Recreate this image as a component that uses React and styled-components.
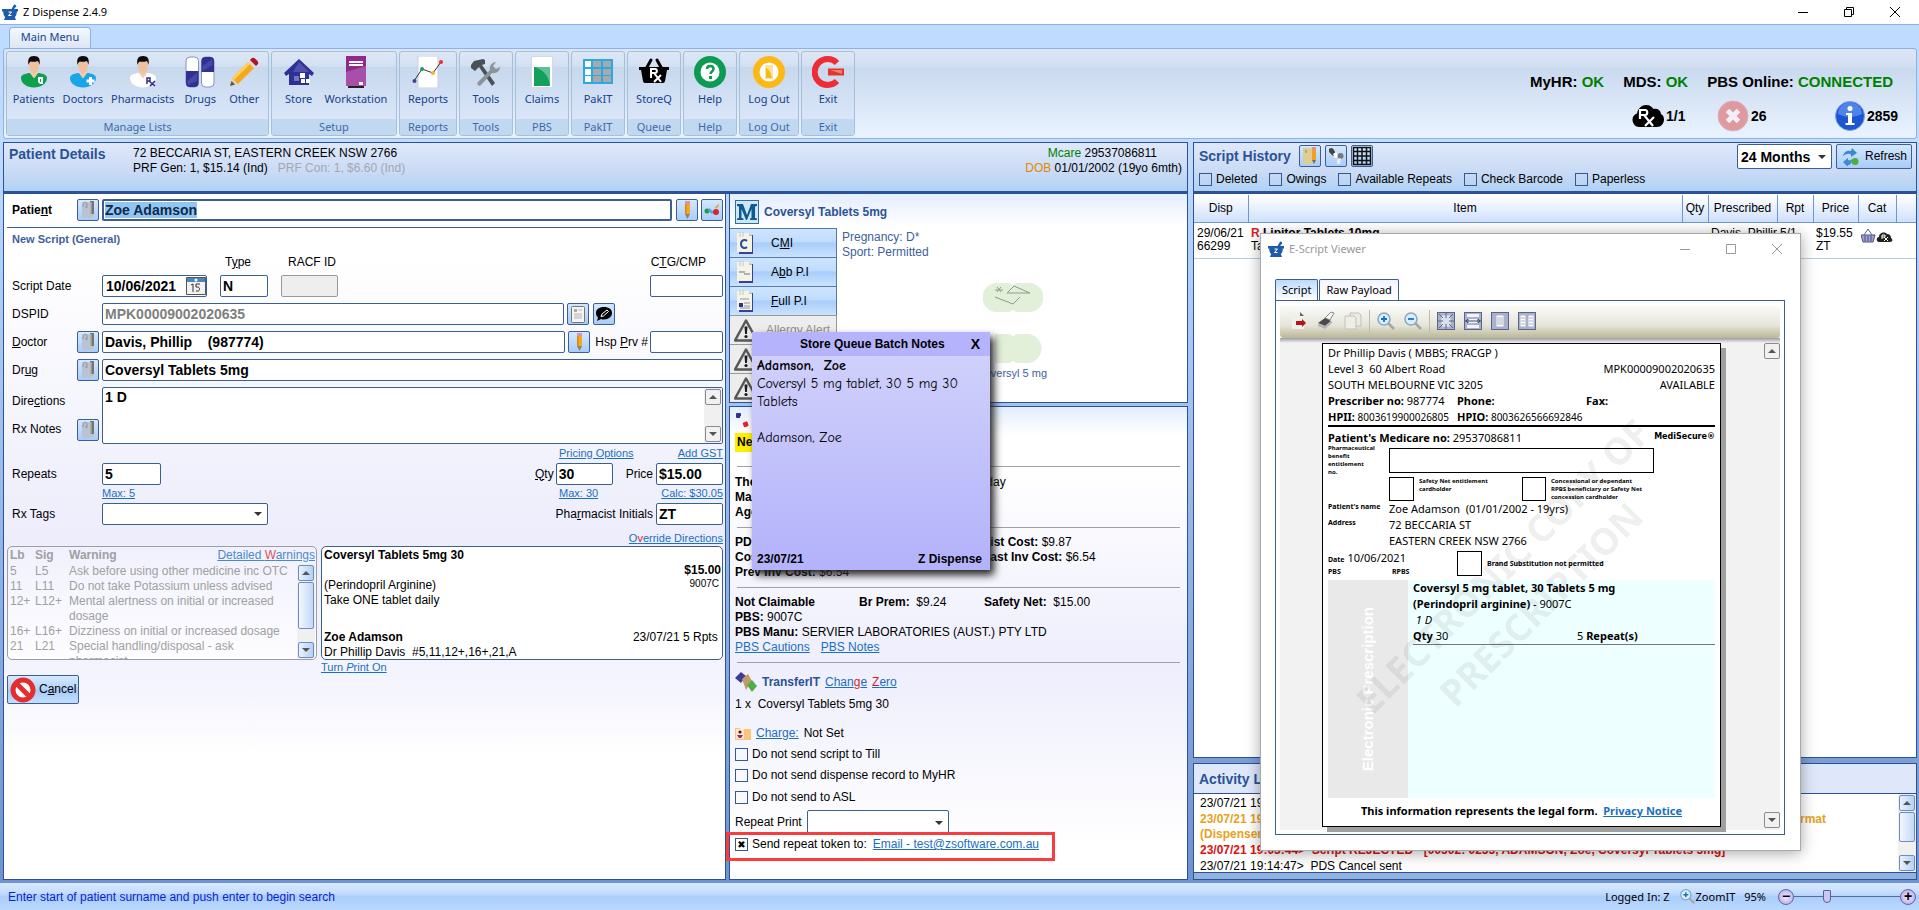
import React from 'react'
import styled, { createGlobalStyle, css } from 'styled-components'

const GlobalStyle = createGlobalStyle`
  * { box-sizing: border-box; }
  body { margin: 0; background: #bfdbff; }
  button, input, select, textarea { font: inherit; color: inherit; margin: 0; }
  svg { display: block; flex: none; }
`

const UI = '"Noto Sans", "Open Sans", sans-serif'
const ARIAL = '"Liberation Sans", Arial, sans-serif'
const LINE = '#3b5f95'
const NAVY = '#2b5296'

/* ---------- icons ---------- */

const Mortar = () => (
  <svg width="16" height="16" viewBox="0 0 16 16">
    <path d="M9.500 5 12 .800a1.500 1.500 0 0 1 2.200 1.600L12 5z" fill="#1d5cab" />
    <path d="M0 5h16v2.500h-1.200c0 3-.800 4.500-2 5.500l1.200 3H2l1.200-3C2 12 1.200 10.500 1.200 7.500H0z" fill="#1d5cab" />
    <path d="M6.500 8h3l-3 3.500h3" stroke="#fff" fill="none" />
  </svg>
)

const Person = ({ color, badge }) => (
  <svg width="28" height="32" viewBox="0 0 28 32">
    <path d="M1 22c0-3.500 4-4 8-5h10c4 1 8 1.500 8 5 0 5.500-6 9.500-13 9.500S1 27.500 1 22z" fill={color} />
    <path d="M9.500 16.500h9L14 22.500z" fill="#f4cdaa" />
    <path d="M9 7c0-3 2-5 5-5s5 2 5 5c0 4-1 8-2 9l-3 2-3-2c-1-1-2-5-2-9z" fill="#efc19c" />
    <path d="M8.500 9C7.500 3 9 0 14 0s6.500 3 5.500 9c-.500-2-1-3.500-2-4-2 1-5 1-6.500.500-1.500.500-2 1.500-2.500 3.500z" fill="#0b0b10" />
    {badge === 'tag' && <path d="M18 21h5v7h-3l-2-2z M20 23v3h1v-3z" fill="#fff" fillRule="evenodd" />}
    {badge === 'cross' && <path d="M20 21h3v2.500h2.500v3H23V29h-3v-2.500h-2.500v-3H20z" fill="#fff" />}
    {badge === 'rx' && <path d="M18 28v-6h3v3h-3m2 0 6 5m0-5-5 5" stroke="#2f2b86" strokeWidth="1.500" fill="none" />}
  </svg>
)

const Drugs = () => (
  <svg width="30" height="32" viewBox="0 0 30 32">
    <rect x="1" y="1" width="12.500" height="30" rx="4" fill="#fff" stroke="#8d90b8" />
    <path d="M1 15h12.500v12a4 4 0 0 1-4 4H5a4 4 0 0 1-4-4z" fill="#2e3192" />
    <rect x="16.500" y="1" width="12.500" height="30" rx="4" fill="#fff" stroke="#8d90b8" />
    <path d="M16.500 16h12.500V5a4 4 0 0 0-4-4h-4.500a4 4 0 0 0-4 4z" fill="#2e3192" />
    <path d="M2 25 12 17v8l-9 4zM17.500 10l10-7v6l-10 6z" fill="#5559b3" opacity=".6" />
  </svg>
)

const Pencil = () => (
  <svg width="32" height="32" viewBox="0 0 32 32">
    <path d="M2 30 4 22l6 6z" fill="#e8cfa8" />
    <path d="M2 30l1.500-5 3.500 3.500z" fill="#555" />
    <path d="M4 22 20 6l6 6-16 16z" fill="#f5a81c" />
    <path d="M4 22 20 6l2 2L6 24z" fill="#ffd25a" />
    <path d="M20 6l3-3 6 6-3 3z" fill="#d9d9e2" />
    <path d="M22 4l2-2c1-.700 2-.300 3 .500l2.500 2.500c.800 1 1 2 .500 3l-2 2z" fill="#b3141f" />
  </svg>
)

const House = () => (
  <svg width="32" height="32" viewBox="0 0 32 32">
    <path d="M16 3 31 17l-2 3-3-2v11H6V18l-3 2-2-3z" fill="#2e3192" />
    <path d="M16 6 26 16H10z" fill="#5a5fc0" opacity=".7" />
    <rect x="11" y="20" width="5" height="5" fill="#6f75c4" />
    <rect x="17" y="17" width="5" height="5" fill="#fff" />
    <rect x="18" y="23" width="4" height="4" fill="#fff" />
    <rect x="23" y="23" width="4" height="4" fill="#fff" />
  </svg>
)

const Workstation = () => (
  <svg width="22" height="32" viewBox="0 0 22 32">
    <rect x="1" width="20" height="30" fill="#92278f" />
    <path d="M1 16 21 10v20H1z" fill="#b66bbb" opacity=".6" />
    <rect x="4" y="5" width="14" height="5" fill="#fff" />
    <path d="M4 7.500h14" stroke="#92278f" />
    <rect x="14" y="26" width="4" height="3" fill="#fff" />
    <rect x="3" y="30" width="16" height="2" fill="#222" />
  </svg>
)

const Reports = () => (
  <svg width="32" height="32" viewBox="0 0 32 32">
    <path d="M6 0h20v32H6z" fill="#fff" stroke="#c8d0dc" />
    <path d="M2 25 10 13l11 4 8-11" fill="none" stroke="#333" />
    <circle cx="2.500" cy="25" r="2" fill="#4a3f8f" />
    <circle cx="10" cy="13" r="2" fill="#12a05c" />
    <circle cx="21" cy="17" r="2" fill="#f5b41c" />
    <circle cx="29" cy="6" r="2" fill="#ee2a2f" />
  </svg>
)

const Tools = () => (
  <svg width="32" height="32" viewBox="0 0 32 32">
    <path d="M1 9l3-4 9-2 2 1v4l-3 1 13 18-3 3L9 11l-4 4-4-3z" fill="#4b5257" />
    <path d="M8 26 20 14c-1-4 2-8 6-8l-3 4 3 3 4-2c0 4-4 7-8 6L11 29c-2 2-5-1-3-3z" fill="#8d9499" />
  </svg>
)

const Claims = () => (
  <svg width="22" height="32" viewBox="0 0 22 32">
    <path d="M.500.500h21v31H.500z" fill="#fff" stroke="#d3dae6" />
    <path d="M3 11h16v19H3z" fill="#12a05c" />
    <path d="M3 11h16v19C18 20 12 13 3 11z" fill="#5fc091" />
  </svg>
)

const PakIT = () => (
  <svg width="32" height="32" viewBox="0 0 32 32">
    <rect x="1" y="3" width="30" height="25" fill="#29abe2" />
    {[5, 13, 20].map(y => (
      <g key={y}>
        <rect x="3" y={y} width="6" height="6" fill="#fff" />
        <rect x="11" y={y} width="8" height="6" fill="#a7a9ac" />
        <rect x="21" y={y} width="8" height="6" fill="#a7a9ac" />
      </g>
    ))}
  </svg>
)

const Basket = () => (
  <svg width="32" height="32" viewBox="0 0 32 32">
    <path d="M8 13 13 4M24 13 19 4" stroke="#000" strokeWidth="3" strokeLinecap="round" />
    <path d="M1 11h30v3h-2l-2 11c-.300 1-1 2-2 2H7c-1 0-2-1-2-2L3 14H1z" fill="#000" />
    <path d="M13 22v-9h4c2.500 0 2.500 4 0 4h-4m3 0 7 9m0-7-7 7" stroke="#fff" strokeWidth="2" fill="none" />
  </svg>
)

const Help = () => (
  <svg width="32" height="32" viewBox="0 0 32 32">
    <circle cx="16" cy="16" r="16" fill="#0b9b54" />
    <circle cx="16" cy="16" r="9.500" fill="#fff" />
    <path d="M13 13c0-4 6.500-4 6.500 0 0 2.500-3 2.500-3 5" stroke="#0b9b54" strokeWidth="2.500" fill="none" />
    <rect x="15" y="20" width="3" height="3" fill="#0b9b54" />
  </svg>
)

const LogOut = () => (
  <svg width="32" height="32" viewBox="0 0 32 32">
    <circle cx="16" cy="16" r="16" fill="#fdb913" />
    <circle cx="16" cy="16" r="9.500" fill="#fff" />
    <path d="M12 9h8v14h-8z" fill="#fbe3a0" />
    <path d="M13 12c3 1 5 5 6 10h-6z" fill="#fdb913" />
  </svg>
)

const Exit = () => (
  <svg width="32" height="32" viewBox="0 0 32 32">
    <path d="M25 7A13 13 0 1 0 25 25" fill="none" stroke="#ed2d36" strokeWidth="6" />
    <rect x="16" y="12.500" width="16" height="7" fill="#e5342f" />
    <path d="M18 14h12v4z" fill="#f37b6c" />
  </svg>
)

const CloudRx = () => (
  <svg width="32" height="22" viewBox="0 0 32 22">
    <path d="M7 22a7 7 0 0 1-2-13.500C6 3 10 0 14 0c4 0 6 2 7.500 4 4-1 7 1 7.500 5 2 1 3 3 3 5.500 0 4-3 7.500-7 7.500z" fill="#000" />
    <path d="M8 14V5h5c3 0 3 5 0 5H8m4 0 9 11m1-9-9 9" stroke="#fff" strokeWidth="2.200" fill="none" />
  </svg>
)

const ErrorIcon = () => (
  <svg width="32" height="32" viewBox="0 0 32 32">
    <circle cx="16" cy="16" r="15" fill="#e09a9f" stroke="#d5b1bb" />
    <path d="M10.500 10.500l11 11m0-11-11 11" stroke="#f2f0f6" strokeWidth="5" />
  </svg>
)

const InfoIcon = () => (
  <svg width="30" height="30" viewBox="0 0 30 30">
    <circle cx="15" cy="15" r="14.500" fill="#1c55cf" stroke="#7aa4e0" />
    <path d="M3 13a12 12 0 0 1 24 0c-8 4-16 4-24 0z" fill="#4f83e8" />
    <circle cx="15" cy="7.500" r="2.500" fill="#fff" />
    <path d="M11 12h6v10h2.500v2h-9v-2H13v-8h-2z" fill="#fff" />
  </svg>
)

const Lookup = () => (
  <svg width="14" height="18" viewBox="0 0 14 18">
    <path d="M1 1h9v16H1z" fill="#b9c3d3" />
    <path d="M2 6c0-6 4-6 4-2s-1 4-1 1" stroke="#8a929c" fill="none" />
    <rect x="9" y="0" width="4" height="13" fill="#767676" />
    <rect x="9" y="1" width="1.500" height="12" fill="#b9b2a6" />
    <path d="M9 13h4l-2 4z" fill="#c7beb0" />
  </svg>
)

const SmallPencil = () => (
  <svg width="7" height="18" viewBox="0 0 7 18">
    <rect x="1" y="0" width="5" height="4" fill="#d890b8" />
    <rect x="1" y="3" width="5" height="10" fill="#f3a81f" />
    <rect x="1" y="3" width="1.500" height="10" fill="#d18a14" />
    <path d="M1 13h5l-2.500 5z" fill="#8a7f72" />
  </svg>
)

const Family = () => (
  <svg width="16" height="12" viewBox="0 0 16 12">
    <circle cx="3" cy="7" r="2.500" fill="#1e9a48" />
    <path d="M5 4l5 4-2 2-4-3z" fill="#4fa8e0" />
    <circle cx="12" cy="8" r="3" fill="#d8232a" />
    <path d="M11 3l4-3v2l-3 3z" fill="#e8a13c" />
  </svg>
)

const Sheet = ({ mark }) => (
  <svg width="18" height="22" viewBox="0 0 18 22">
    <path d="M3 3h14v19H3z" fill="#3b3f9a" />
    <path d="M1 1h12l3 3v16H1z" fill="#f5f3e6" />
    <path d="M13 1v3h3z" fill="#c9c6b4" />
    <path d="M4 0v5m3-5v5" stroke="#c9c7b6" />
    {mark === 'c' && <path d="M11 9c-2-2-6-1-6 3s4 5 6 3" stroke="#2c4f9e" strokeWidth="2" fill="none" />}
    {mark === 'line' && <path d="M3 11h6m-1 2h6" stroke="#9b9ca6" strokeWidth="1.500" />}
    {mark === 'full' && (
      <g>
        <path d="M4 9h9M8 13h6M8 16h6M4 18h10" stroke="#8f93a8" />
        <rect x="3" y="13" width="4" height="4" fill="#2e3192" />
      </g>
    )}
  </svg>
)

const Warn = () => (
  <svg width="24" height="23" viewBox="0 0 24 23">
    <path d="M12 1.500 23 21.500H1z" fill="#e9e9e9" stroke="#585858" strokeWidth="2.500" strokeLinejoin="round" />
    <path d="M10.500 7.500h3l-.600 7.500h-1.800z" fill="#1a1a1a" />
    <circle cx="12" cy="17.500" r="1.600" fill="#1a1a1a" />
  </svg>
)

const LogoM = () => (
  <svg width="24" height="24" viewBox="0 0 24 24">
    <rect x=".5" y=".5" width="23" height="23" fill="#cfe6f5" stroke="#2f6d9d" />
    <path d="M2 4h6l4 11 4-11h6v2l-2 .500V18l2 .500V20h-7v-1.500l1.500-.500V9l-4.500 11h-1L6.500 9v9l2 .500V20H2v-1.500L4 18V6.500L2 6z" fill="#0d5a94" />
  </svg>
)

const Pills = () => (
  <svg width="16" height="18" viewBox="0 0 16 18">
    <rect x="1" y="2" width="5" height="5" rx="1" fill="#2e3192" />
    <rect x="5" y="5" width="5" height="5" rx="1" fill="#f2f2f6" />
    <rect x="8" y="11" width="5" height="5" rx="1" fill="#e2262c" transform="rotate(-20 10 13)" />
  </svg>
)

const Transfer = () => (
  <svg width="22" height="20" viewBox="0 0 22 20">
    <path d="M0 6 6 0l5 4-5 7z" fill="#3b3c95" />
    <path d="M7 7l6-5 4 7-6 9z" fill="#c29a66" />
    <path d="M12 13l5-5 5 6-5 6z" fill="#4fae4a" />
  </svg>
)

const ChargeIcon = () => (
  <svg width="16" height="13" viewBox="0 0 16 13">
    <path d="M0 1h5l1 1h10v11H0z" fill="#fbc47c" />
    <rect x="1" y="2" width="8" height="10" fill="#fde7c8" />
    <circle cx="5" cy="5" r="1.500" fill="#222" />
    <path d="M2 8h6l-2 3H4z" fill="#a3246b" />
  </svg>
)

const Ban = () => (
  <svg width="26" height="26" viewBox="0 0 26 26">
    <circle cx="13" cy="13" r="10" fill="#fff" stroke="#e52c2f" strokeWidth="5" />
    <path d="M6 6l14 14" stroke="#e52c2f" strokeWidth="5" />
  </svg>
)

const Bubble = () => (
  <svg width="16" height="14" viewBox="0 0 16 14">
    <path d="M8 0c5 0 8 2.500 8 6s-3 6.500-8 6.500c-1 0-2 0-3-.500L1 14l1-3.500C.500 9 0 8 0 6 0 2.500 3 0 8 0z" fill="#000" />
    <path d="M5 9.500 6 7l5-4 1.500 1.500L7.500 9z" fill="none" stroke="#fff" />
  </svg>
)

const Doc = () => (
  <svg width="14" height="17" viewBox="0 0 14 17">
    <rect x=".5" y=".5" width="13" height="16" rx="1" fill="#f4f4f4" stroke="#777" />
    <path d="M3 3h3v3H3z" fill="#aaa" />
    <path d="M7 4h4M3 8h8M3 10h8M3 12h8" stroke="#b7b7b7" />
  </svg>
)

const GridIcon = () => (
  <svg width="20" height="20" viewBox="0 0 20 20">
    <path d="M1.500 1.500h17v17h-17zM5.500 1v18M10 1v18M14.500 1v18M1 5.500h18M1 10h18M1 14.500h18" fill="none" stroke="#111" strokeWidth="1.500" />
  </svg>
)

const PadPencil = () => (
  <svg width="16" height="18" viewBox="0 0 16 18">
    <path d="M1 1h9v16H1z" fill="#ddcf94" />
    <path d="M3 3h2v3H3z" fill="#b9a968" />
    <rect x="10" y="0" width="4" height="3" fill="#d890b8" />
    <rect x="10" y="2" width="4" height="11" fill="#f3a01f" />
    <path d="M10 13h4l-2 4z" fill="#7a6a52" />
  </svg>
)

const Capsules = () => (
  <svg width="16" height="18" viewBox="0 0 16 18">
    <path d="M1 2c2-2 4-1 5 1l2 4-3 2-4-4z" fill="#444" />
    <path d="M5 7l3-2 3 5-4 1z" fill="#fff" />
    <circle cx="12.500" cy="9" r="3" fill="#777" />
    <path d="M9 12l4-1-1 6h-3z" fill="#ececec" />
  </svg>
)

const RefreshIcon = () => (
  <svg width="18" height="18" viewBox="0 0 18 18">
    <path d="M1 8c1-5 5-6 8-5l1-3 5 5-6 4V6.500C7 5 4 6 1 8z" fill="#3c8ad0" />
    <path d="M1 14l5-4v2c2 1 3 0 4-1 0 4-2 6-4 6v2z" fill="#3c8ad0" />
    <circle cx="13" cy="13.500" r="3.500" fill="#4caf3a" />
  </svg>
)

const BasketCloud = () => (
  <svg width="32" height="16" viewBox="0 0 32 16">
    <path d="M3 8 7 2l4 6" fill="none" stroke="#5d628a" />
    <path d="M0 8h14l-2 7H2z" fill="#9ea3cc" stroke="#4d5187" />
    <path d="M4 9v5m3-5v5m3-5v5" stroke="#4d5187" />
    <path d="M18 15c-3 0-3-5 0-5 0-4 5-6 8-3 3 0 4 2 4 4 2 1 2 4-1 4z" fill="#222" />
    <path d="M21 12V8h3v2h-3m2 0 4 4m0-4-4 4" stroke="#fff" fill="none" />
  </svg>
)

const Magnifier = ({ sign, size = 20 }) => (
  <svg width={size} height={size} viewBox="0 0 20 20">
    <path d="M12 12l6 6" stroke="#a9a5a0" strokeWidth="2.500" />
    <circle cx="8" cy="8" r="6" fill="#d8efff" stroke="#8aa6c4" strokeWidth="1.500" />
    <path d={sign === '+' ? 'M5 8h6M8 5v6' : 'M5 8h6'} stroke="#1b72c4" strokeWidth="1.800" />
  </svg>
)

const Export = () => (
  <svg width="20" height="20" viewBox="0 0 20 20">
    <path d="M3 2h8l4 4v12H3z" fill="#efefec" />
    <path d="M11 1l4 4h-4z" fill="#666" />
    <path d="M7 10h6V8l4 4-4 4v-2H7z" fill="#b3151a" />
  </svg>
)

const Print = () => (
  <svg width="20" height="20" viewBox="0 0 20 20">
    <path d="M9 7l6-6 3 1-4 7z" fill="#f6f6f6" stroke="#8a8a8a" />
    <path d="M2 12l7-5 6 3-6 5z" fill="#4b4b4f" />
    <path d="M2 12v3l7 3 7-6v-2l-7 5z" fill="#b5b5ba" />
  </svg>
)

const Copy = () => (
  <svg width="20" height="20" viewBox="0 0 20 20">
    <path d="M7 2h9l2 2v11H7z" fill="#ecebe2" stroke="#c2c1b6" />
    <path d="M2 5h9l2 2v11H2z" fill="#efeee6" stroke="#c2c1b6" />
  </svg>
)

const ViewMode = ({ mode }) => (
  <svg width="18" height="18" viewBox="0 0 18 18">
    <rect x=".5" y=".5" width="17" height="17" fill="#a9b1cc" stroke="#5a6488" />
    {mode === 'fit' && (
      <g fill="none" stroke="#eef0f6">
        <path d="M5 4h8v10H5z" fill="#d9deec" />
        <path d="M9 1v5M9 12v5M1 9h5M12 9h5M2 2l4 4M16 2l-4 4M2 16l4-4M16 16l-4-4" stroke="#5a6488" />
      </g>
    )}
    {mode === 'width' && (
      <g>
        <path d="M3 2h12v3H3zM3 13h12v3H3zM5 7h8v4H5z" fill="#f4f5fa" />
        <path d="M1 9h16M4 7 2 9l2 2M14 7l2 2-2 2" stroke="#3f4970" fill="none" />
      </g>
    )}
    {mode === 'one' && <path d="M5 3h8v12H5zM6 6h6M6 8h6M6 10h6M6 12h6" fill="#fff" stroke="#a9b1cc" />}
    {mode === 'two' && <path d="M2 3h6v12H2zM10 3h6v12h-6zM3 6h4M3 9h4M3 12h4M11 6h4M11 9h4M11 12h4" fill="#fff" stroke="#a9b1cc" />}
  </svg>
)

const WinIcon = ({ kind, color = '#000' }) => (
  <svg width="12" height="12" viewBox="0 0 12 12" fill="none" stroke={color}>
    {kind === 'min' && <path d="M1 6.500h10" />}
    {kind === 'restore' && <path d="M1.500 3.500h7v7h-7zM3.500 3.500v-2h7v7h-2" />}
    {kind === 'max' && <path d="M1.500 1.500h9v9h-9z" />}
    {kind === 'close' && <path d="M1 1l10 10M11 1 1 11" />}
  </svg>
)

const CalendarIcon = () => (
  <svg width="20" height="18" viewBox="0 0 20 18">
    <path d="M.5.5h19v17H.5z" fill="#f2f2f2" stroke="#555" />
    <path d="M1 1h18v4H1z" fill="#4d86b8" />
    <circle cx="10" cy="3" r="1.500" fill="#fff" />
    <path d="M5 8l2-1v8m7-8h-4v3h2c2 0 2 4 0 4h-2" fill="none" stroke="#333" />
  </svg>
)

const TabletPhoto = () => (
  <svg width="60" height="80" viewBox="0 0 60 80">
    <path d="M14 0h12c2 0 2 2 4 2s2-2 4-2h12a14 14 0 0 1 0 29H34c-2 0-2-2-4-2s-2 2-4 2H14a14 14 0 0 1 0-29z" fill="#e2efd9" />
    <path d="M12 51h14c2 0 2 2 4 2s2-2 4-2h10a14 14 0 0 1 0 29H34c-2 0-2-2-4-2s-2 2-4 2H12z" fill="#e2efd9" />
    <path d="M24 10l7-7 16 7zM12 14l18 7 7-7M14 4l4 5m0-5-4 5m-2-2h8" fill="none" stroke="#8d9c8d" />
  </svg>
)

/* ---------- frame ---------- */

const Shell = styled.div`
  position: relative;
  min-height: 100vh;
  display: flex;
  flex-direction: column;
  overflow: hidden;
  background: linear-gradient(#bfdbff 140px, #6f93d0 880px);
  font: 12px/15px ${ARIAL};
  color: #000;
`

const TitleBar = styled.header`
  height: 24px;
  display: flex;
  align-items: center;
  gap: 5px;
  padding-left: 2px;
  background: #fff;
  font: 11px/16px ${UI};
`

const WindowButtons = styled.div`
  margin-left: auto;
  padding-right: ${p => p.$pr || 0}px;
  display: flex;
  button {
    width: ${p => p.$w || 46}px;
    height: 20px;
    display: grid;
    place-items: center;
    padding: 0;
    border: 0;
    background: none;
  }
`

const TabStrip = styled.div`
  height: 24px;
  padding: 2px 0 0 9px;
  border-top: 1px solid #8db2e3;
  background: #bfdbff;
`

const RibbonTab = styled.button`
  height: 22px;
  width: 82px;
  padding: 0 0 4px;
  border: 1px solid #8db2e3;
  border-bottom: 0;
  border-radius: 4px 4px 0 0;
  background: linear-gradient(#f4f8fe, #dbe5f5);
  font: 11px/16px ${UI};
  color: #15428b;
`

const Ribbon = styled.nav`
  margin: 0 2px 3px 3px;
  padding: 2px;
  display: flex;
  gap: 2px;
  border: 1px solid #8db2e3;
  border-radius: 3px;
  background: linear-gradient(#dbe5f5 0, #d2dff1 18px, #c9d9ee 19px, #e8f2ff 84px);
`

const Group = styled.div`
  width: ${p => p.$w}px;
  display: flex;
  flex-direction: column;
  border: 1px solid #a5c0d8;
  border-radius: 3px;
  background: linear-gradient(#dde8f5, #d3e0f2 14px, #c7d8ed 15px, #dfeafc);
  font: 11px/15px ${UI};
`

const GroupItems = styled.div`
  flex: 1;
  display: flex;
  justify-content: center;
  padding-top: 4px;
`

const RibbonButton = styled.button`
  min-width: 44px;
  height: 63px;
  padding: 0 4px;
  border: 0;
  background: none;
  display: flex;
  flex-direction: column;
  align-items: center;
  gap: 3px;
  color: #15428b;
  white-space: nowrap;
`

const GroupName = styled.div`
  height: 16px;
  line-height: 16px;
  text-align: center;
  color: #3e6aaa;
  background: #c1d8f1;
`

const Services = styled.div`
  margin-left: auto;
  padding: 20px 15px 0 0;
  font: bold 15px/22px ${ARIAL};
  b { color: #008000; }
`

const ServiceRow = styled.div`
  display: flex;
  justify-content: flex-end;
  gap: 19px;
  padding-right: 6px;
  margin-bottom: 6px;
`

const Counts = styled.div`
  display: grid;
  grid-template-columns: 85px 118px 64px;
  justify-content: end;
`

const Count = styled.span`
  display: flex;
  align-items: center;
  gap: 2px;
  height: 34px;
  font-size: 14px;
`

const Workspace = styled.main`
  flex: 1;
  display: grid;
  grid-template-columns: minmax(0, 1185fr) minmax(0, 724fr);
  gap: 5px;
  padding: 0 2px 3px 3px;
`

const Column = styled.div`
  display: flex;
  flex-direction: column;
  min-width: 0;
`

const PanelHead = styled.header`
  height: 52px;
  flex: none;
  border: 1px solid ${NAVY};
  border-bottom-width: 3px;
  background: linear-gradient(#dfe8fa, #c8daf5 30px, #b0d2f2);
`

const Title = styled.h2`
  margin: 0;
  font: bold 14px/20px ${ARIAL};
  color: ${NAVY};
`

const PatientHead = styled(PanelHead)`
  display: grid;
  grid-template-columns: 124px 1fr auto;
  padding: 3px 5px;
  ${Title} { line-height: 16px; }
`

const HeadLines = styled.div`
  text-align: ${p => (p.$right ? 'right' : 'left')};
  p { margin: 0; }
  ${p => p.$right && 'p:first-child { padding-right: 25px; }'}
  i { font-style: normal; color: #a3a8b0; }
`

const Tint = styled.span`
  color: ${p => p.$c};
`

const LeftBody = styled.div`
  flex: 1;
  display: grid;
  grid-template-columns: minmax(0, 723fr) minmax(0, 459fr);
  gap: 3px;
`

/* ---------- form ---------- */

const Form = styled.form`
  display: flex;
  flex-direction: column;
  padding: 5px 2px 0 3px;
  border: 1px solid ${NAVY};
  border-top: 0;
  background: linear-gradient(#fff 60px, #ededfc 340px, #f5f5fe 500px, #fff 560px);
`

const Row = styled.div`
  display: flex;
  align-items: center;
  min-height: 22px;
  margin-bottom: ${p => p.$mb ?? 6}px;
`

const Label = styled.label`
  width: 70px;
  flex: none;
  padding-left: 5px;
  font-weight: ${p => (p.$bold ? 'bold' : 'normal')};
  white-space: nowrap;
`

const Slot = styled.div`
  width: 25px;
  flex: none;
`

const Tool = styled.button`
  width: 22px;
  height: 22px;
  flex: none;
  display: grid;
  place-items: center;
  padding: 0;
  border: 1px solid ${LINE};
  border-radius: 2px;
  background: linear-gradient(#d3e8ff, #a9ccf8);
  margin-left: ${p => p.$ml || 0}px;
`

const fieldStyle = css`
  border: 1px solid ${LINE};
  border-radius: 2px;
  background: #fff;
  font: bold 14px/20px ${ARIAL};
`

const Field = styled.input`
  ${fieldStyle}
  height: 22px;
  padding: 0 ${p => (p.$strong ? 1 : 2)}px;
  min-width: 0;
  outline: none;
  ${p => (p.$w ? `width: ${p.$w}px; flex: none;` : 'flex: 1;')}
  ${p => p.$strong && 'border-width: 2px;'}
  ${p => p.$muted && 'color: #7f7f7f;'}
  &::selection { background: #92c6f0; color: #10294e; }
  &:disabled { background: #eee; border-color: #999; }
`

const DateBox = styled.div`
  ${fieldStyle}
  width: 105px;
  height: 22px;
  display: flex;
  align-items: center;
  input { border: 0; background: none; width: 83px; padding: 0 3px; outline: none; }
  button { padding: 0; border: 0; background: none; }
`

const Rule = styled.hr`
  width: 100%;
  margin: 2px 0 4px;
  border: 0;
  border-top: 1px solid ${LINE};
`

const SubHead = styled.h3`
  margin: 0 0 8px 5px;
  font: bold 11px/15px ${ARIAL};
  color: #3c5f9f;
`

const Link = styled.a`
  color: #1a6fc4;
  font-size: ${p => p.$size || 12}px;
  text-decoration: underline;
  em { color: #d81f26; font-style: normal; }
`

const CaptionRow = styled.div`
  display: flex;
  height: 15px;
  margin-bottom: 5px;
  padding-left: 218px;
  span:nth-child(2) { margin-left: 37px; }
  span:last-child { margin-left: auto; padding-right: 17px; }
`

const Gap = styled.div`
  width: ${p => p.$w}px;
  flex: none;
`

const Spacer = styled.div`
  flex: 1;
`

const Area = styled.div`
  ${fieldStyle}
  flex: 1;
  height: 57px;
  display: flex;
  textarea {
    flex: 1;
    height: 55px;
    border: 0;
    resize: none;
    padding: 0 2px;
    background: none;
    font: bold 14px/18px ${ARIAL};
    overflow: hidden;
    outline: none;
  }
`

const Track = styled.div`
  width: 18px;
  flex: none;
  display: flex;
  flex-direction: column;
  padding: 1px;
  background: #f0f0f0;
`

const Arrow = styled.button`
  width: 16px;
  height: 16px;
  flex: none;
  padding: 0;
  display: grid;
  place-items: center;
  border: 1px solid ${p => (p.$blue ? '#6d8cc0' : '#8a8a8a')};
  border-radius: 2px;
  background: ${p => (p.$blue ? 'linear-gradient(90deg, #e9f2ff, #b5d0f5)' : '#f1f1f1')};
  &::before {
    content: '';
    border: 4px solid transparent;
    ${p => (p.$up ? 'border-top: 0; border-bottom-color: #555;' : 'border-bottom: 0; border-top-color: #555;')}
  }
`

const Thumb = styled.div`
  height: ${p => p.$h}px;
  margin: 1px 0;
  border: 1px solid #6d8cc0;
  border-radius: 2px;
  background: linear-gradient(90deg, #f3f7ff, #c4d8f7);
`

const TwoLabels = styled.div`
  width: 95px;
  flex: none;
  display: grid;
  grid-template-rows: 28px 29px;
  align-items: center;
  > div { display: flex; align-items: center; }
`

const SelectBox = styled.span`
  position: relative;
  display: inline-block;
  flex: none;
  width: ${p => p.$w}px;
  select {
    ${fieldStyle}
    appearance: none;
    width: 100%;
    height: ${p => p.$h || 22}px;
    padding: 0 3px;
    display: block;
  }
  &::after {
    content: '';
    position: absolute;
    right: 6px;
    top: 50%;
    margin-top: -2px;
    border: 4px solid transparent;
    border-top-color: #333;
    border-bottom: 0;
    pointer-events: none;
  }
`

const CostLinks = styled.div`
  display: grid;
  grid-template-columns: 1fr 97px 67px;
  height: 15px;
  padding-left: 95px;
  margin-bottom: 2px;
  > :last-child { text-align: right; white-space: nowrap; }
`

const Override = styled.div`
  height: 15px;
  text-align: right;
`

const Boxes = styled.div`
  display: grid;
  grid-template-columns: 310px 1fr;
  gap: 4px;
  height: 114px;
`

const WarnBox = styled.div`
  border: 1px solid #9d9da3;
  border-radius: 5px;
  padding: 0 1px 0 2px;
  display: flex;
  flex-direction: column;
  overflow: hidden;
  color: #a0a0a0;
  background: linear-gradient(#f1f1fe, #fdfdff);
  a { opacity: .8; }
`

const WarnHead = styled.div`
  display: grid;
  grid-template-columns: 25px 34px 1fr auto;
  font-weight: bold;
  line-height: 17px;
  a { font-weight: normal; }
`

const WarnBody = styled.div`
  flex: 1;
  min-height: 0;
  display: flex;
  table { flex: 1; border-collapse: collapse; table-layout: fixed; align-self: flex-start; }
  td { padding: 0; vertical-align: top; white-space: nowrap; }
  td:nth-child(1) { width: 25px; }
  td:nth-child(2) { width: 34px; }
  td:last-child { white-space: pre; }
`

const LabelBox = styled.div`
  border: 1px solid ${LINE};
  border-radius: 5px;
  background: #fff;
  padding: 1px 1px 0 2px;
  overflow: hidden;
  > div { display: flex; justify-content: space-between; height: 15px; white-space: pre; }
  small { font-size: 10px; padding-right: 2px; line-height: 11px; }
`

const LabelGap = styled.p`
  height: 22px;
  margin: 0;
`

const PrintLink = styled.div`
  height: 15px;
  padding-left: 314px;
`

const CancelButton = styled.button`
  display: flex;
  align-items: center;
  gap: 3px;
  width: 72px;
  height: 29px;
  padding: 0 2px;
  border: 1px solid ${LINE};
  border-radius: 2px;
  background: linear-gradient(#d5eaff, #b2d3fb 50%, #a4c9f8 52%, #c4dffd);
`

/* ---------- drug panel ---------- */

const Drug = styled.section`
  display: flex;
  flex-direction: column;
  gap: 3px;
`

const Card = styled.div`
  border: 1px solid ${NAVY};
  ${p => p.$open && 'border-top: 0;'}
  background: ${p => p.$bg || 'linear-gradient(#e3edfe, #fff 32px)'};
  ${p => p.$grow && 'flex: 1;'}
`

const DrugTitle = styled.div`
  display: flex;
  align-items: center;
  gap: 5px;
  height: 34px;
  padding: 2px 5px 0;
  font-weight: bold;
  color: ${NAVY};
`

const DrugBody = styled.div`
  display: grid;
  grid-template-columns: 107px 1fr;
  height: 174px;
`

const SideButton = styled.button`
  display: flex;
  align-items: center;
  width: 107px;
  height: 29px;
  padding: 0 0 0 6px;
  border: 0;
  border-top: 1px solid #5579ae;
  border-right: 1px solid #5579ae;
  background: linear-gradient(#cfe5ff, #bfdcff 45%, #a8cdf9 50%, #c9e3ff);
  svg + span { margin-left: 17px; }
  &:disabled {
    padding-left: 4px;
    color: #8f8f8f;
    background: #ededed;
    border-color: #999;
    svg + span { margin-left: 8px; }
  }
`

const DrugInfo = styled.div`
  padding: 2px 5px;
  color: #3d5f9c;
`

const PillArt = styled.div`
  width: 205px;
  margin-top: 23px;
  display: flex;
  flex-direction: column;
  align-items: flex-end;
  gap: 3px;
  svg { margin-right: 4px; }
  span { font-size: 11px; white-space: nowrap; }
`

const Details = styled.div`
  padding: 4px 5px 0;
  background: linear-gradient(#e3edfe, transparent 28px);
  p { margin: 0; }
`

const Line = styled.hr`
  margin: ${p => p.$mt || 7}px 2px ${p => p.$mb || 7}px;
  border: 0;
  border-top: 1px solid #a0a0a8;
`

const Flag = styled.span`
  padding: 2px;
  background: #ffee00;
  font-weight: bold;
`

const Pair = styled.div`
  display: grid;
  grid-template-columns: 248px 1fr;
`

const Triple = styled.div`
  display: grid;
  grid-template-columns: 124px 125px 1fr;
`

const Inline = styled.div`
  display: flex;
  align-items: center;
  gap: ${p => p.$gap ?? 5}px;
  margin-top: ${p => p.$mt || 0}px;
`

const TransferName = styled.b`
  color: ${NAVY};
`

const Check = styled.label`
  display: flex;
  align-items: center;
  gap: 4px;
  height: ${p => p.$h || 21}px;
  white-space: nowrap;
  input {
    appearance: none;
    width: 13px;
    height: 13px;
    display: grid;
    place-items: center;
    border: 1px solid #35588f;
  }
  input:checked::after {
    content: '✖';
    font: 10px/10px "DejaVu Sans", sans-serif;
  }
`

const Callout = styled.div`
  width: 329px;
  height: 29px;
  margin: -3px 0 0 -9px;
  padding: 0 0 4px 6px;
  position: relative;
  display: flex;
  align-items: center;
  gap: 6px;
  border: 3px solid #f83c3f;
`

/* ---------- history ---------- */

const HistoryHead = styled(PanelHead)`
  display: flex;
  justify-content: space-between;
  padding-left: 5px;
`

const HeadTop = styled.div`
  display: flex;
  align-items: center;
  height: 25px;
  ${Tool} { margin-left: 4px; }
  ${Title} + ${Tool} { margin-left: 8px; }
`

const HeadRight = styled.div`
  display: flex;
  gap: 4px;
  padding: 1px 4px 0 0;
  height: 26px;
`

const Checks = styled.div`
  display: flex;
  gap: 12px;
  padding-top: 1px;
`

const RefreshButton = styled.button`
  width: 76px;
  height: 25px;
  display: flex;
  align-items: center;
  gap: 5px;
  padding: 0 5px;
  border: 1px solid ${LINE};
  border-radius: 2px;
  background: linear-gradient(#d3e8ff, #a9ccf8);
`

const Table = styled.table`
  width: 100%;
  margin-top: 1px;
  border-collapse: collapse;
  table-layout: fixed;
  th {
    height: 27px;
    padding: 0;
    font-weight: normal;
    background: linear-gradient(#fff, #cfe0fb);
    border-right: 1px solid #6d97d3;
    border-bottom: 1px solid #6d97d3;
  }
  th:last-child { border-right: 0; }
  td {
    height: 36px;
    padding: 4px 0 0 3px;
    vertical-align: top;
    line-height: 13px;
    white-space: nowrap;
    overflow: hidden;
    border-bottom: 1px solid #b8cbe9;
  }
  em { color: #d81f26; font-style: normal; font-weight: bold; }
`

const Activity = styled.section`
  margin-top: 5px;
  border: 1px solid ${NAVY};
  background: linear-gradient(#a9c6ec, #8fb2df);
  padding-bottom: 6px;
  > header { height: 30px; padding: 5px; background: #dfe8fa; border-bottom: 1px solid ${NAVY}; }
`

const Log = styled.div`
  display: flex;
  height: 79px;
  background: #fff;
  border-bottom: 1px solid ${NAVY};
`

const LogLines = styled.div`
  flex: 1;
  padding: 1px 6px;
`

const LogLine = styled.div`
  line-height: ${p => p.$lh || 16}px;
  color: ${p => p.$c || '#000'};
  font-weight: ${p => (p.$bold ? 'bold' : 'normal')};
  display: grid;
  grid-template-columns: 1fr 92px;
  white-space: pre;
`

const StatusBar = styled.footer`
  height: 27px;
  flex: none;
  display: flex;
  align-items: center;
  padding: 0 3px 0 8px;
  background: linear-gradient(#d9eaff, #c3dcff 10px, #a9cdfa 14px, #bcd9ff);
  font: 11px/16px ${UI};
`

const Hint = styled.span`
  flex: 1;
  color: #0a1fd0;
  font: 12px/16px ${ARIAL};
`

const StatusItems = styled.div`
  display: flex;
  gap: 9px;
  margin-right: 12px;
  span { display: flex; align-items: center; }
`

const ZoomSlider = styled.input`
  appearance: none;
  width: 106px;
  height: 16px;
  background: linear-gradient(#56709c, #56709c) center / 100% 1px no-repeat;
  &::-webkit-slider-thumb {
    appearance: none;
    width: 8px;
    height: 13px;
    border: 1px solid #5b5f94;
    border-radius: 1px 1px 4px 4px;
    background: #c9c8f0;
  }
`

const Round = styled.button`
  width: 16px;
  height: 16px;
  padding: 0;
  border: 1px solid #6a63a8;
  border-radius: 50%;
  background: radial-gradient(#efeaff, #aaa0e0);
  font: bold 14px/13px ${ARIAL};
`

/* ---------- floating windows ---------- */

const Note = styled.aside`
  position: absolute;
  left: 752px;
  top: 332px;
  width: 238px;
  height: 238px;
  display: flex;
  flex-direction: column;
  background: linear-gradient(#d0d0fb 24px, #b3b2fb);
  box-shadow: 4px 5px 8px #222;
  header {
    display: flex;
    align-items: center;
    height: 24px;
    padding: 0 10px 0 22px;
    background: #b4b3fb;
    font-weight: bold;
  }
  header span { flex: 1; text-align: center; }
  header button { border: 0; padding: 0; background: none; font: bold 14px/20px ${ARIAL}; }
  section { flex: 1; padding: 1px 5px; font: 14px/18px "Comic Sans MS", "Comic Neue", ${UI}; white-space: pre-wrap; }
  footer { display: flex; justify-content: space-between; padding: 0 8px 3px 5px; font-weight: bold; }
`

const Viewer = styled.aside`
  position: absolute;
  left: 1260px;
  top: 233px;
  width: 541px;
  height: 618px;
  display: flex;
  flex-direction: column;
  padding: 0 15px 15px 14px;
  border: 1px solid #a9a9a9;
  background: #fff;
  box-shadow: 0 2px 14px rgba(0, 0, 0, .35);
  font: 11px/16px ${UI};
`

const ViewerTitle = styled.header`
  display: flex;
  align-items: center;
  gap: 5px;
  height: 29px;
  margin: 0 -15px 16px -7px;
  color: #999;
`

const Tabs = styled.div`
  display: flex;
  gap: 1px;
`

const Tab = styled.button`
  height: 21px;
  padding: 0 6px;
  border: 1px solid ${LINE};
  border-bottom: 0;
  border-radius: 2px 2px 0 0;
  background: ${p => (p.$on ? 'linear-gradient(#bcdafc, #fff)' : 'linear-gradient(#f4f4ff, #fff)')};
  font: 11px/16px ${UI};
`

const TabBody = styled.div`
  flex: 1;
  min-height: 0;
  display: flex;
  flex-direction: column;
  padding: 5px 4px 4px;
  border: 1px solid ${LINE};
`

const Toolbar = styled.div`
  height: 32px;
  flex: none;
  display: flex;
  align-items: center;
  padding: 0 9px 2px;
  gap: 7px;
  border-radius: 0 3px 3px 4px;
  background: linear-gradient(#fbfbf8, #e6e5da 60%, #b9b796);
  button { width: 20px; height: 20px; padding: 0; border: 0; background: none; display: grid; place-items: center; }
`

const Divider = styled.i`
  width: 1px;
  height: 22px;
  margin: 0 -1px;
  background: #bdbcae;
`

const Stage = styled.div`
  flex: 1;
  min-height: 0;
  display: flex;
  padding: 5px 0 0 42px;
  background: linear-gradient(#9d9d9d, #f2f2f2 5px);
`

const StageScroll = styled.div`
  margin-left: auto;
  display: flex;
  flex-direction: column;
  justify-content: space-between;
  padding-bottom: 2px;
`

const Page = styled.article`
  position: relative;
  width: 399px;
  height: 484px;
  padding: 1px 5px;
  border: 1px solid #000;
  background: #fff;
  box-shadow: 5px 5px 0 #9f9f9f;
  p { margin: 0; white-space: pre; }
`

const Watermark = styled.div`
  position: absolute;
  inset: 0;
  display: grid;
  place-content: center;
  text-align: center;
  transform: rotate(-45deg);
  font: bold 37px/54px ${UI};
  color: rgba(0, 0, 0, .08);
  white-space: nowrap;
  pointer-events: none;
`

const Split = styled.div`
  display: flex;
  justify-content: space-between;
`

const PhoneRow = styled.div`
  display: grid;
  grid-template-columns: 129px 129px 1fr;
  white-space: nowrap;
`

const HpId = styled.span`
  font-size: 10px;
  b { font-size: 11px; }
`

const Thick = styled.hr`
  margin: 0 0 3px;
  border: 0;
  border-top: 2px solid #000;
`

const MediSecure = styled.span`
  font: bold 8px/14px "DejaVu Sans", sans-serif;
`

const PbsGrid = styled.div`
  display: grid;
  grid-template-columns: 61px 25px 108px 24px 1fr;
  row-gap: 4px;
  margin-top: 2px;
  font: bold 6px/8px ${UI};
  white-space: pre;
`

const Entitlement = styled.div`
  height: 28px;
  margin-top: -4px;
`

const BoxNote = styled.div`
  padding-left: 5px;
`

const Blank = styled.div`
  height: ${p => p.$h || 24}px;
  ${p => p.$w && `width: ${p.$w}px;`}
  border: 1px solid #000;
  ${p => p.$span && 'grid-column: 2 / 6; width: 265px;'}
`

const Tiny = styled.b`
  font-size: 7px;
  line-height: 12px;
`

const PersonRow = styled.div`
  display: grid;
  grid-template-columns: 61px 1fr;
  white-space: pre;
`

const DateRow = styled.div`
  display: grid;
  grid-template-columns: 129px 30px 1fr;
  align-items: center;
  height: 29px;
  p { line-height: 15px; }
`

const PbsLine = styled.div`
  display: grid;
  grid-template-columns: 64px 1fr;
  height: 12px;
`

const Script = styled.div`
  display: grid;
  grid-template-columns: 80px 1fr;
  height: 218px;
  margin-top: 2px;
`

const Band = styled.div`
  display: grid;
  place-items: center;
  background: #e9e9e9;
  color: #fff;
  span { writing-mode: vertical-rl; transform: rotate(180deg); font: bold 15px/18px ${ARIAL}; }
`

const Order = styled.div`
  background: #eeffff;
  padding-left: 5px;
  > div { display: grid; grid-template-columns: 164px 1fr; border-bottom: 1px solid #777; }
`

const Legal = styled.div`
  padding-top: 5px;
  text-align: center;
  font-weight: bold;
`

const groups = [
  ['Manage Lists', 263, [
    ['Patients', <Person color="#0e9f4f" badge="tag" />],
    ['Doctors', <Person color="#19a6e6" badge="cross" />],
    ['Pharmacists', <Person color="#fff" badge="rx" />],
    ['Drugs', <Drugs />],
    ['Other', <Pencil />],
  ]],
  ['Setup', 126, [['Store', <House />], ['Workstation', <Workstation />]]],
  ['Reports', 58, [['Reports', <Reports />]]],
  ['Tools', 54, [['Tools', <Tools />]]],
  ['PBS', 54, [['Claims', <Claims />]]],
  ['PakIT', 54, [['PakIT', <PakIT />]]],
  ['Queue', 54, [['StoreQ', <Basket />]]],
  ['Help', 54, [['Help', <Help />]]],
  ['Log Out', 60, [['Log Out', <LogOut />]]],
  ['Exit', 54, [['Exit', <Exit />]]],
]

const warnings = [
  ['5', 'L5', 'Ask before using other medicine inc OTC'],
  ['11', 'L11', 'Do not take Potassium unless advised'],
  ['12+', 'L12+', 'Mental alertness on initial or increased\ndosage'],
  ['16+', 'L16+', 'Dizziness on initial or increased dosage'],
  ['21', 'L21', 'Special handling/disposal - ask\npharmacist'],
]

const PatientForm = () => (
  <Form onSubmit={e => e.preventDefault()}>
    <Row $mb={4}>
      <Label $bold htmlFor="patient">Patie<u>n</u>t</Label>
      <Slot><Tool type="button" aria-label="Find patient"><Lookup /></Tool></Slot>
      <Field id="patient" $strong defaultValue="Zoe Adamson" autoFocus onFocus={e => e.target.select()} />
      <Tool type="button" $ml={4} aria-label="Edit patient"><SmallPencil /></Tool>
      <Tool type="button" $ml={3} aria-label="Family"><Family /></Tool>
    </Row>
    <Rule />
    <SubHead>New Script (General)</SubHead>
    <CaptionRow>
      <span>T<u>y</u>pe</span>
      <span>RACF ID</span>
      <span>C<u>T</u>G/CMP</span>
    </CaptionRow>
    <Row>
      <Label htmlFor="date">Script Date</Label>
      <Slot />
      <DateBox>
        <input id="date" defaultValue="10/06/2021" />
        <button type="button" aria-label="Calendar"><CalendarIcon /></button>
      </DateBox>
      <Gap $w={13} />
      <Field $w={48} defaultValue="N" aria-label="Type" />
      <Gap $w={13} />
      <Field $w={57} disabled aria-label="RACF ID" />
      <Spacer />
      <Field $w={73} aria-label="CTG/CMP" />
    </Row>
    <Row>
      <Label htmlFor="dspid">DSPID</Label>
      <Slot />
      <Field id="dspid" $muted readOnly defaultValue="MPK00009002020635" />
      <Tool type="button" $ml={3} aria-label="Document"><Doc /></Tool>
      <Tool type="button" $ml={4} aria-label="Comment"><Bubble /></Tool>
      <Gap $w={108} />
    </Row>
    <Row>
      <Label htmlFor="doctor"><u>D</u>octor</Label>
      <Slot><Tool type="button" aria-label="Find doctor"><Lookup /></Tool></Slot>
      <Field id="doctor" defaultValue="Davis, Phillip    (987774)" />
      <Tool type="button" $ml={3} aria-label="Edit doctor"><SmallPencil /></Tool>
      <Gap $w={5} />
      <label htmlFor="hsp">Hsp <u>P</u>rv #</label>
      <Gap $w={2} />
      <Field id="hsp" $w={73} />
    </Row>
    <Row>
      <Label htmlFor="drug">Dr<u>u</u>g</Label>
      <Slot><Tool type="button" aria-label="Find drug"><Lookup /></Tool></Slot>
      <Field id="drug" defaultValue="Coversyl Tablets 5mg" />
    </Row>
    <Row $mb={2}>
      <TwoLabels>
        <Label htmlFor="directions">Dire<u>c</u>tions</Label>
        <div>
          <Label as="span">Rx Notes</Label>
          <Tool type="button" aria-label="Rx notes"><Lookup /></Tool>
        </div>
      </TwoLabels>
      <Area>
        <textarea id="directions" defaultValue="1 D" />
        <Track>
          <Arrow type="button" $up aria-label="Up" />
          <Spacer />
          <Arrow type="button" aria-label="Down" />
        </Track>
      </Area>
    </Row>
    <CostLinks>
      <span />
      <Link $size={11} href="#pricing">Pricing Options</Link>
      <Link $size={11} href="#gst">Add GST</Link>
    </CostLinks>
    <Row $mb={1}>
      <Label htmlFor="repeats">Repeats</Label>
      <Slot />
      <Field id="repeats" $w={59} defaultValue="5" />
      <Spacer />
      <label htmlFor="qty"><u>Q</u>ty</label>
      <Gap $w={2} />
      <Field id="qty" $w={57} defaultValue="30" />
      <Gap $w={13} />
      <label htmlFor="price">Price</label>
      <Gap $w={3} />
      <Field id="price" $w={67} defaultValue="$15.00" />
    </Row>
    <CostLinks>
      <Link $size={11} href="#max">Max: 5</Link>
      <Link $size={11} href="#maxqty">Max: 30</Link>
      <Link $size={11} href="#calc">Calc: $30.05</Link>
    </CostLinks>
    <Row>
      <Label htmlFor="tags">Rx Tags</Label>
      <Slot />
      <SelectBox $w={166}><select id="tags"><option></option></select></SelectBox>
      <Spacer />
      <label htmlFor="initials">Pha<u>r</u>macist Initials</label>
      <Gap $w={3} />
      <Field id="initials" $w={67} defaultValue="ZT" />
    </Row>
    <Override><Link $size={11} href="#override">O<em>v</em>erride Directions</Link></Override>
    <Boxes>
      <WarnBox>
        <WarnHead>
          <span>Lb</span><span>Sig</span><span>Warning</span>
          <Link href="#warnings">Detailed <em>W</em>arnings</Link>
        </WarnHead>
        <WarnBody>
          <table>
            <tbody>
              {warnings.map(w => (
                <tr key={w[0]}><td>{w[0]}</td><td>{w[1]}</td><td>{w[2]}</td></tr>
              ))}
            </tbody>
          </table>
          <Track>
            <Arrow type="button" $blue $up aria-label="Up" />
            <Thumb $h={47} />
            <Spacer />
            <Arrow type="button" $blue aria-label="Down" />
          </Track>
        </WarnBody>
      </WarnBox>
      <LabelBox>
        <div><b>Coversyl Tablets 5mg 30</b></div>
        <div><span /><b>$15.00</b></div>
        <div><span>(Perindopril Arginine)</span><small>9007C</small></div>
        <div>Take ONE tablet daily</div>
        <LabelGap />
        <div><b>Zoe Adamson</b><span>23/07/21 5 Rpts </span></div>
        <div>Dr Phillip Davis  #5,11,12+,16+,21,A</div>
      </LabelBox>
    </Boxes>
    <PrintLink><Link $size={11} href="#print">Turn <i>P</i>rint On</Link></PrintLink>
    <CancelButton type="button"><Ban /><span>C<u>a</u>ncel</span></CancelButton>
  </Form>
)

const DrugPanel = () => (
  <Drug>
    <Card $open>
      <DrugTitle><LogoM />Coversyl Tablets 5mg</DrugTitle>
      <DrugBody>
        <div>
          <SideButton><Sheet mark="c" /><span>C<u>M</u>I</span></SideButton>
          <SideButton><Sheet mark="line" /><span>A<u>b</u>b P.I</span></SideButton>
          <SideButton><Sheet mark="full" /><span><u>F</u>ull P.I</span></SideButton>
          <SideButton disabled><Warn /><span>Allergy Alert</span></SideButton>
          <SideButton disabled aria-label="Interaction"><Warn /></SideButton>
          <SideButton disabled aria-label="Warning"><Warn /></SideButton>
        </div>
        <DrugInfo>
          <div>Pregnancy: D*</div>
          <div>Sport: Permitted</div>
          <PillArt>
            <TabletPhoto />
            <span>Coversyl 5 mg</span>
          </PillArt>
        </DrugInfo>
      </DrugBody>
    </Card>
    <Card $grow $bg="linear-gradient(#fff 60px, #eeeefd 260px, #fff 440px)">
      <Details>
        <Pills />
        <Inline $mt={4}><Flag>New</Flag></Inline>
        <Line $mt={14} $mb={8} />
        <Pair><b>Therapy:</b><span>&nbsp;day</span></Pair>
        <Pair><b>Max:</b></Pair>
        <Pair><b>Age:</b></Pair>
        <Line />
        <Pair><b>PDL:</b><span><b>List Cost:</b> $9.87</span></Pair>
        <Pair><b>Cost:</b><span><b>Last Inv Cost:</b> $6.54</span></Pair>
        <p><b>Prev Inv Cost:</b> $6.54</p>
        <Line />
        <Triple>
          <b>Not Claimable</b>
          <span><b>Br Prem:</b>&nbsp; $9.24</span>
          <span><b>Safety Net:</b>&nbsp; $15.00</span>
        </Triple>
        <p><b>PBS:</b> 9007C</p>
        <p><b>PBS Manu:</b> SERVIER LABORATORIES (AUST.) PTY LTD</p>
        <Inline $gap={11}><Link href="#cautions">PBS Cautions</Link><Link href="#notes">PBS Notes</Link></Inline>
        <Line />
        <Inline $mt={9}>
          <Transfer /><TransferName>TransferIT</TransferName>
          <Link href="#change">Chan<em>g</em>e</Link><Link href="#zero"><em>Z</em>ero</Link>
        </Inline>
        <Inline $mt={5}>1 x&nbsp; Coversyl Tablets 5mg 30</Inline>
        <Inline $mt={14}><ChargeIcon /><Link href="#charge">Charge:</Link>Not Set</Inline>
        <Inline $mt={3}><Check><input type="checkbox" />Do not send script to Till</Check></Inline>
        <Check><input type="checkbox" />Do not send dispense record to MyHR</Check>
        <Check $h={22}><input type="checkbox" />Do not send to ASL</Check>
        <Inline $mt={2}>
          <label htmlFor="rptprint">Repeat Print</label>
          <SelectBox $w={142} $h={25}><select id="rptprint"><option></option></select></SelectBox>
        </Inline>
        <Callout>
          <Check $h={16}><input type="checkbox" defaultChecked />Send repeat token to:</Check>
          <Link href="mailto:test@zsoftware.com.au">Email - test@zsoftware.com.au</Link>
        </Callout>
      </Details>
    </Card>
  </Drug>
)

const History = () => (
  <Column>
    <HistoryHead>
      <div>
        <HeadTop>
          <Title>Script History</Title>
          <Tool aria-label="Edit"><PadPencil /></Tool>
          <Tool aria-label="Drugs"><Capsules /></Tool>
          <Tool aria-label="Grid"><GridIcon /></Tool>
        </HeadTop>
        <Checks>
          {['Deleted', 'Owings', 'Available Repeats', 'Check Barcode', 'Paperless'].map(name => (
            <Check key={name}><input type="checkbox" />{name}</Check>
          ))}
        </Checks>
      </div>
      <HeadRight>
        <SelectBox $w={95} $h={25}><select aria-label="Period"><option>24 Months</option></select></SelectBox>
        <RefreshButton><RefreshIcon />Refresh</RefreshButton>
      </HeadRight>
    </HistoryHead>
    <Card $open $grow $bg="#fff">
      <Table>
        <colgroup>
          {[54, 0, 26, 69, 36, 45, 38, 20].map((w, i) => <col key={i} width={w || undefined} />)}
        </colgroup>
        <thead>
          <tr>{['Disp', 'Item', 'Qty', 'Prescribed', 'Rpt', 'Price', 'Cat', ''].map((h, i) => <th key={i}>{h}</th>)}</tr>
        </thead>
        <tbody>
          <tr>
            <td>29/06/21<br />66299</td>
            <td><em>R</em> <b>Lipitor Tablets 10mg</b><br />Take ONE tablet daily</td>
            <td />
            <td>Davis, Phillip</td>
            <td>5/1</td>
            <td>$19.55<br />ZT</td>
            <td><BasketCloud /></td>
            <td />
          </tr>
        </tbody>
      </Table>
    </Card>
    <Activity>
      <header><Title>Activity Log</Title></header>
      <Log>
        <LogLines>
          <LogLine>23/07/21 19:02:11&gt;</LogLine>
          <LogLine $c="#eaa01e" $bold><span>23/07/21 19:03:02&gt;</span><span>rmat</span></LogLine>
          <LogLine $c="#eaa01e" $bold $lh={15}>(Dispenser)</LogLine>
          <LogLine $c="#dd1111" $bold>23/07/21 19:03:44&gt;  Script REJECTED - [00502: 0255, ADAMSON, Zoe, Coversyl Tablets 5mg]</LogLine>
          <LogLine>23/07/21 19:14:47&gt;  PDS Cancel sent</LogLine>
        </LogLines>
        <Track>
          <Arrow $blue $up aria-label="Up" />
          <Thumb $h={30} />
          <Spacer />
          <Arrow $blue aria-label="Down" />
        </Track>
      </Log>
    </Activity>
  </Column>
)

const EScript = () => (
  <Viewer>
    <ViewerTitle>
      <Mortar />E-Script Viewer
      <WindowButtons>
        <button aria-label="Minimise"><WinIcon kind="min" color="#999" /></button>
        <button aria-label="Maximise"><WinIcon kind="max" color="#999" /></button>
        <button aria-label="Close"><WinIcon kind="close" color="#999" /></button>
      </WindowButtons>
    </ViewerTitle>
    <Tabs><Tab $on>Script</Tab><Tab>Raw Payload</Tab></Tabs>
    <TabBody>
      <Toolbar>
        <button aria-label="Export"><Export /></button>
        <button aria-label="Print"><Print /></button>
        <button aria-label="Copy"><Copy /></button>
        <Divider />
        <button aria-label="Zoom in"><Magnifier sign="+" /></button>
        <button aria-label="Zoom out"><Magnifier sign="-" /></button>
        <Divider />
        <button aria-label="Actual size"><ViewMode mode="fit" /></button>
        <button aria-label="Fit width"><ViewMode mode="width" /></button>
        <button aria-label="One page"><ViewMode mode="one" /></button>
        <button aria-label="Two pages"><ViewMode mode="two" /></button>
      </Toolbar>
      <Stage>
        <Page>
          <p>Dr Phillip Davis ( MBBS; FRACGP )</p>
          <Split><p>Level 3  60 Albert Road</p><span>MPK00009002020635</span></Split>
          <Split><span>SOUTH MELBOURNE VIC 3205</span><span>AVAILABLE</span></Split>
          <PhoneRow><span><b>Prescriber no:</b> 987774</span><b>Phone:</b><b>Fax:</b></PhoneRow>
          <PhoneRow>
            <HpId><b>HPII:</b> 8003619900026805</HpId>
            <HpId><b>HPIO:</b> 8003626566692846</HpId>
          </PhoneRow>
          <Thick />
          <Split><span><b>Patient&apos;s Medicare no:</b> 29537086811</span><MediSecure>MediSecure®</MediSecure></Split>
          <PbsGrid>
            <Entitlement>{'Pharmaceutical\nbenefit\nentitlement\nno.'}</Entitlement>
            <Blank $span $h={25} />
            <i />
            <Blank />
            <BoxNote>{'Safety Net entitlement\ncardholder'}</BoxNote>
            <Blank />
            <BoxNote>{'Concessional or dependant\nRPBS beneficiary or Safety Net\nconcession cardholder'}</BoxNote>
          </PbsGrid>
          <PersonRow><Tiny>Patient&apos;s name</Tiny><span>Zoe Adamson  (01/01/2002 - 19yrs)</span></PersonRow>
          <PersonRow><Tiny>Address</Tiny><span>{'72 BECCARIA ST\nEASTERN CREEK NSW 2766'}</span></PersonRow>
          <DateRow>
            <div>
              <p><Tiny>Date</Tiny> 10/06/2021</p>
              <PbsLine><Tiny>PBS</Tiny><Tiny>RPBS</Tiny></PbsLine>
            </div>
            <Blank $w={25} $h={25} />
            <Tiny>Brand Substitution not permitted</Tiny>
          </DateRow>
          <Script>
            <Band><span>Electronic Prescription</span></Band>
            <Order>
              <p><b>Coversyl 5 mg tablet, 30 Tablets 5 mg</b></p>
              <p><b>(Perindopril arginine)</b> - 9007C</p>
              <p><i> 1 D</i></p>
              <div><span><b>Qty</b> 30</span><span>5 <b>Repeat(s)</b></span></div>
            </Order>
          </Script>
          <Legal>This information represents the legal form.&nbsp; <Link $size={11} href="#privacy">Privacy Notice</Link></Legal>
          <Watermark><span>ELECTRONIC COPY OF</span><span>PRESCRIPTION</span></Watermark>
        </Page>
        <StageScroll>
          <Arrow $up aria-label="Up" />
          <Arrow aria-label="Down" />
        </StageScroll>
      </Stage>
    </TabBody>
  </Viewer>
)

export default function App() {
  return (
    <Shell>
      <GlobalStyle />
      <TitleBar>
        <Mortar />Z Dispense 2.4.9
        <WindowButtons $pr={1}>
          <button aria-label="Minimise"><WinIcon kind="min" /></button>
          <button aria-label="Restore"><WinIcon kind="restore" /></button>
          <button aria-label="Close"><WinIcon kind="close" /></button>
        </WindowButtons>
      </TitleBar>
      <TabStrip><RibbonTab>Main Menu</RibbonTab></TabStrip>
      <Ribbon>
        {groups.map(([name, w, items]) => (
          <Group key={name} $w={w}>
            <GroupItems>
              {items.map(([label, icon]) => <RibbonButton key={label}>{icon}{label}</RibbonButton>)}
            </GroupItems>
            <GroupName>{name}</GroupName>
          </Group>
        ))}
        <Services>
          <ServiceRow>
            <span>MyHR: <b>OK</b></span>
            <span>MDS: <b>OK</b></span>
            <span>PBS Online: <b>CONNECTED</b></span>
          </ServiceRow>
          <Counts>
            <Count><CloudRx />1/1</Count>
            <Count><ErrorIcon />26</Count>
            <Count><InfoIcon />2859</Count>
          </Counts>
        </Services>
      </Ribbon>
      <Workspace>
        <Column>
          <PatientHead>
            <Title>Patient Details</Title>
            <HeadLines>
              <p>72 BECCARIA ST, EASTERN CREEK NSW 2766</p>
              <p>PRF Gen: 1, $15.14 (Ind) &nbsp; <i>PRF Con: 1, $6.60 (Ind)</i></p>
            </HeadLines>
            <HeadLines $right>
              <p><Tint $c="#008000">Mcare</Tint> 29537086811</p>
              <p><Tint $c="#e08a00">DOB</Tint> 01/01/2002 (19yo 6mth)</p>
            </HeadLines>
          </PatientHead>
          <LeftBody>
            <PatientForm />
            <DrugPanel />
          </LeftBody>
        </Column>
        <History />
      </Workspace>
      <StatusBar>
        <Hint>Enter start of patient surname and push enter to begin search</Hint>
        <StatusItems>
          <span>Logged In: Z</span>
          <span><Magnifier sign="+" size={17} />ZoomIT</span>
          <span>95%</span>
        </StatusItems>
        <Round aria-label="Zoom out">−</Round>
        <ZoomSlider type="range" min="50" max="200" defaultValue="95" aria-label="Zoom" />
        <Round aria-label="Zoom in">+</Round>
      </StatusBar>
      <Note>
        <header><span>Store Queue Batch Notes</span><button aria-label="Close">X</button></header>
        <section>
          <b>Adamson,  Zoe</b>{'\nCoversyl 5 mg tablet, 30 5 mg 30\nTablets\n\nAdamson, Zoe'}
        </section>
        <footer><span>23/07/21</span><span>Z Dispense</span></footer>
      </Note>
      <EScript />
    </Shell>
  )
}
